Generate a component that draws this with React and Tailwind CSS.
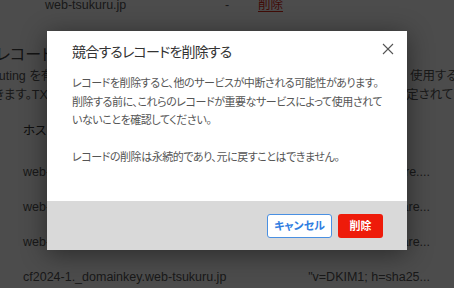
import React from "react";

const rows = [
  { host: "web-tsukuru.jp", value: "route1.mx.cloudflare...." },
  { host: "web-tsukuru.jp", value: "route2.mx.cloudflare..." },
  { host: "web-tsukuru.jp", value: "route3.mx.cloudflare..." },
  { host: "cf2024-1._domainkey.web-tsukuru.jp", value: "\"v=DKIM1; h=sha25..." },
];

function Page() {
  return (
    <div className="flex flex-col text-[12.5px] text-[#555] font-['Liberation_Sans','Noto_Sans_CJK_JP',sans-serif] [font-feature-settings:'palt']">
      <div className="flex items-center h-[20px] -mt-[5px] whitespace-nowrap">
        <span className="pl-[45px] w-[225px] shrink-0">web-tsukuru.jp</span>
        <span className="w-[33px] shrink-0">-</span>
        <span className="text-[#d8281a] underline underline-offset-2">削除</span>
      </div>

      <div className="mt-[28px] -ml-[4px] text-[16px] leading-[24px] text-[#444]">レコード</div>

      <div className="leading-[19px] whitespace-nowrap">
        <div className="flex">
          <span className="w-[462px] shrink-0 -ml-[52px]">Email Routing を有効にするには、以下のレコードを</span>
          <span>使用するよう</span>
        </div>
        <div className="flex">
          <span className="w-[413px] shrink-0 -ml-[7px]">きます。TXT レコードはこのドメインで</span>
          <span>定されてい</span>
        </div>
      </div>

      <div className="mt-[9px] pl-[23px] flex flex-col whitespace-nowrap">
        <div className="flex items-center h-[35px] mb-[6px] text-[#333]">
          <span className="w-[284px] shrink-0">ホスト名</span>
          <span>値</span>
        </div>
        {rows.map((r, i) => (
          <div key={i} className="flex items-center h-[35px]">
            <span className="w-[284px] shrink-0">{r.host}</span>
            <span className="w-[123px] shrink-0 overflow-hidden flex justify-end">{r.value}</span>
          </div>
        ))}
      </div>
    </div>
  );
}

function Modal() {
  return (
    <div className="w-[360px] bg-white flex flex-col shadow-[0_4px_24px_rgba(0,0,0,0.45)] font-['Noto_Sans_CJK_JP',sans-serif] [font-feature-settings:'palt']">
      <div className="relative px-[25px] pt-[8px]">
        <h2 className="text-[14px] leading-[24px] tracking-[-0.8px] text-[#333] font-normal">競合するレコードを削除する</h2>
        <button className="absolute right-[13px] top-[12px] w-[12px] h-[12px] text-[#555]">
          <svg viewBox="0 0 12 12" width="12" height="12" fill="none" stroke="currentColor" strokeWidth="1.1">
            <line x1="1" y1="1" x2="11" y2="11" />
            <line x1="11" y1="1" x2="1" y2="11" />
          </svg>
        </button>
      </div>

      <div className="px-[25px] mt-[10px] text-[11px] leading-[18.5px] tracking-[-0.45px] text-[#555] whitespace-nowrap">
        <p>
          レコードを削除すると、他のサービスが中断される可能性があります。
          <br />
          削除する前に、これらのレコードが重要なサービスによって使用されて
          <br />
          いないことを確認してください。
        </p>
        <p className="mt-[18px]">レコードの削除は永続的であり、元に戻すことはできません。</p>
      </div>

      <div className="mt-[36px] h-[49px] bg-[#d9d9d9] flex items-center justify-end gap-[6px] pr-[24px]">
        <button className="h-[24px] w-[65px] rounded-[3px] border border-[#4a90e2] bg-white text-[11px] font-bold text-[#2f7de1]">
          キャンセル
        </button>
        <button className="h-[24px] w-[45px] rounded-[3px] bg-[#ee1b0a] text-[11px] font-bold text-white">
          削除
        </button>
      </div>
    </div>
  );
}

export default function App() {
  return (
    <div className="relative w-[454px] h-[288px] overflow-hidden bg-white">
      <Page />
      <div className="absolute inset-0 bg-black/70 flex justify-center items-start pt-[31px]">
        <Modal />
      </div>
    </div>
  );
}
